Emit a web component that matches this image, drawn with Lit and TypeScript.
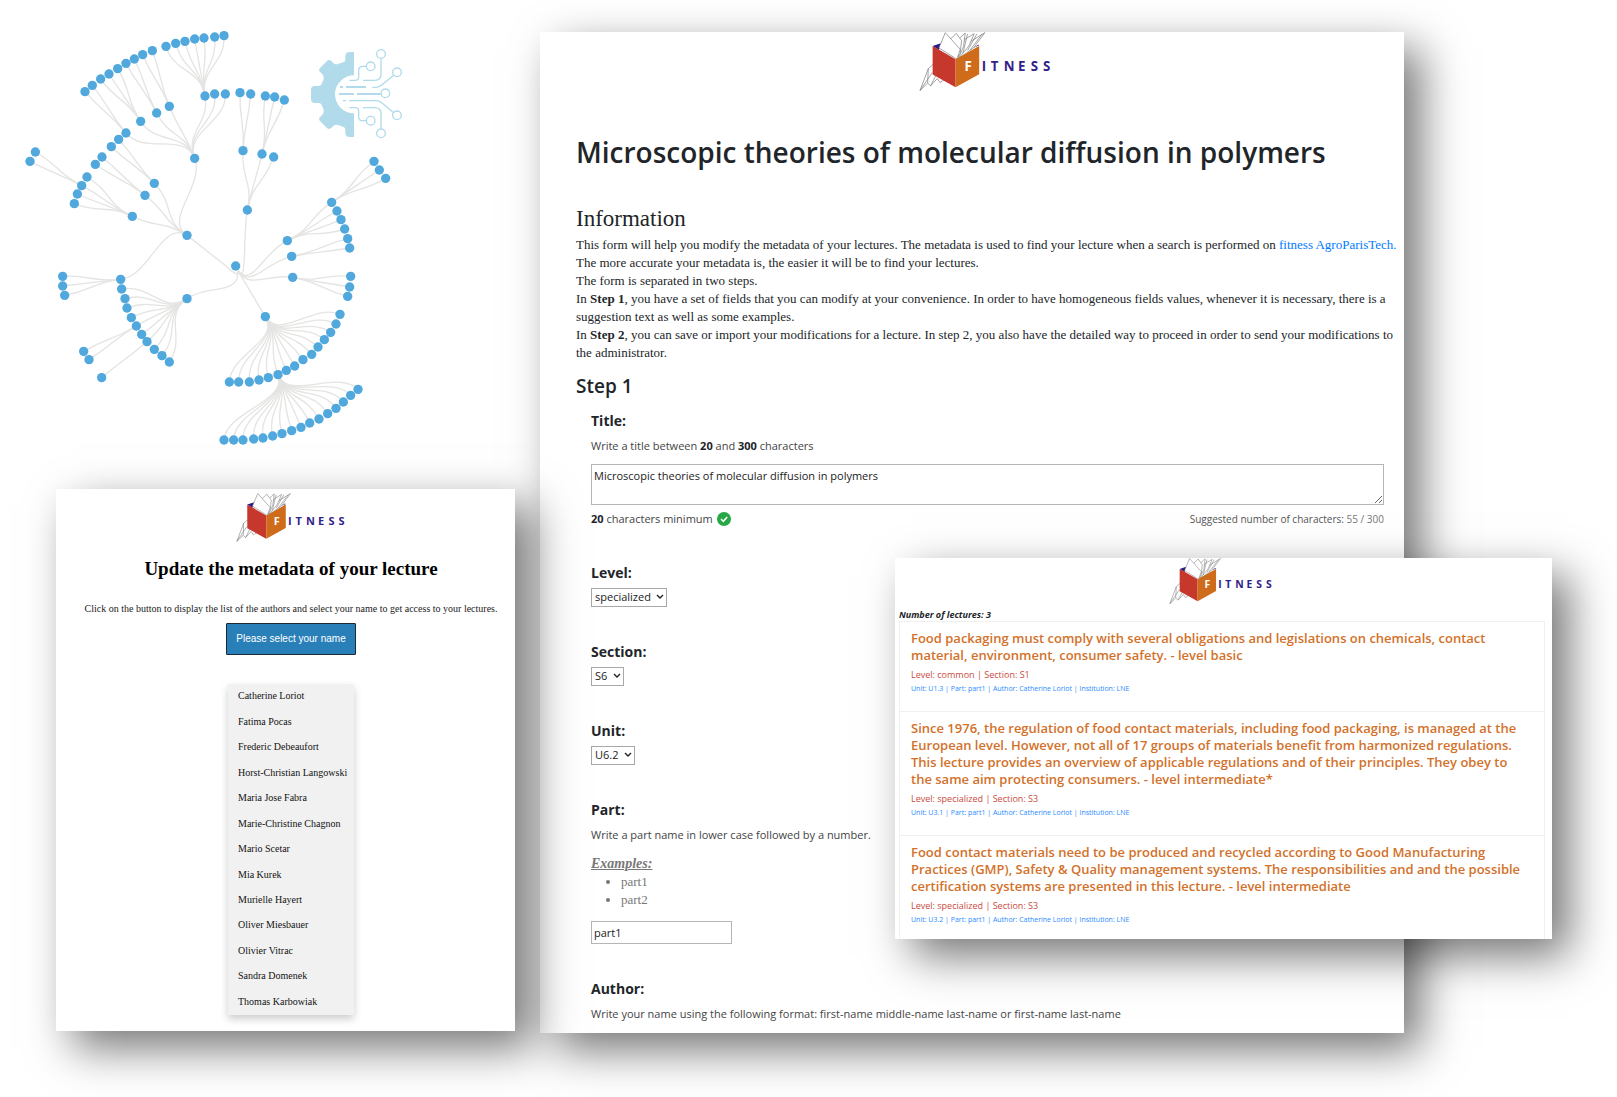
import { LitElement, html, css, svg } from "lit";
import { customElement, property } from "lit/decorators.js";

type Pt = [number, number];

/* ---------- Shared logo ---------- */
@customElement("fitness-logo")
class FitnessLogo extends LitElement {
  static styles = css`
    :host { display: block; }
    .mark { display: block; width: 100%; height: auto; }
    .page { fill: #fff; stroke: #777; stroke-width: 2; stroke-linejoin: round; }
    .word { font-family: "Open Sans", "Noto Sans", sans-serif; font-weight: 700; font-size: 40px; fill: #33218a; }
    .initial { fill: #fff; }
  `;
  render() {
    return html`<svg class="mark" viewBox="58 36 400 180" role="img" aria-label="FITNESS">
      <path class="page" d="M61 212 L86 146 L100 134 L112 150 L136 178 L121 188 L113 176 L93 198 L84 190 Z" />
      <path class="page" d="M86 146 L84 190 M61 212 L98 158 M93 198 L112 160" />
      <path d="M99 78 L124 70 L118 90 Z M239 76 L222 84 L236 74 Z" fill="#2b1b8c" />
      <path class="page" d="M174 108 L214 64 L256 38 L222 84 L180 114 Z" />
      <path class="page" d="M174 108 L196 58 L224 41 L208 78 L180 112 Z" />
      <path class="page" d="M174 108 L176 58 L197 39 L192 80 L178 112 Z" />
      <path class="page" d="M172 112 L150 60 L170 40 L186 62 L182 100 Z" />
      <path class="page" d="M118 84 L137 38 L182 88 L172 118 Z" />
      <path class="page" d="M204 42 L190 100 M232 42 L204 92 M248 42 L212 90" />
      <path d="M99 78 L168 118 V202 L99 164 Z" fill="#c6372c" />
      <path d="M168 118 L239 78 V163 L168 202 Z" fill="#cf6c1b" />
      <text class="word initial" x="195" y="153">F</text>
      <text class="word" x="247 274 313 356 394 431" y="153">ITNESS</text>
    </svg>`;
  }
}

/* ---------- Radial tree ---------- */
const CENTER: Pt = [707, 798];

const BRANCHES: { from: Pt; to: Pt[] }[] = [
  { from: [561, 706], to: [[584, 475], [463, 550], [435, 586], [397, 649], [362, 838]] },
  { from: [584, 475], to: [[615, 288], [644, 282], [676, 282], [508, 319], [470, 339], [422, 364], [378, 399]] },
  { from: [615, 288], to: [[498, 139], [527, 130], [555, 124], [584, 117], [612, 114], [644, 111], [672, 107]] },
  { from: [508, 319], to: [[457, 152], [428, 164]] },
  { from: [470, 339], to: [[403, 177], [378, 190]] },
  { from: [422, 364], to: [[353, 206], [327, 222], [302, 237]] },
  { from: [378, 399], to: [[277, 256], [255, 275]] },
  { from: [463, 550], to: [[356, 418], [334, 440]] },
  { from: [435, 586], to: [[306, 471], [286, 493]] },
  { from: [397, 649], to: [[261, 531], [245, 557], [232, 582], [223, 611]] },
  { from: [245, 557], to: [[106, 456], [90, 484]] },
  { from: [362, 838], to: [[188, 829], [188, 858], [194, 886]] },
  { from: [561, 896], to: [[365, 867], [375, 896], [381, 924], [394, 953], [409, 978], [425, 1003], [441, 1025], [463, 1048], [486, 1067], [508, 1086]] },
  { from: [409, 978], to: [[251, 1054], [267, 1079]] },
  { from: [441, 1025], to: [[305, 1133]] },
  { from: [742, 630], to: [[729, 452], [786, 462], [821, 471]] },
  { from: [729, 452], to: [[720, 278], [752, 282]] },
  { from: [786, 462], to: [[796, 288], [824, 291], [853, 300]] },
  { from: [862, 722], to: [[995, 607], [1011, 633], [1023, 659], [1034, 687]] },
  { from: [995, 607], to: [[1122, 484], [1138, 510], [1157, 535]] },
  { from: [875, 769], to: [[1043, 716], [1049, 744]] },
  { from: [878, 832], to: [[1052, 829], [1049, 861], [1043, 889]] },
  { from: [796, 950], to: [[1020, 943], [1008, 972], [992, 997], [973, 1019], [954, 1041], [935, 1063], [909, 1079], [884, 1098], [859, 1111], [834, 1124], [805, 1133], [777, 1140], [748, 1146], [716, 1146], [688, 1146]] },
  { from: [834, 1124], to: [[1074, 1168], [1052, 1186], [1030, 1206], [1008, 1225], [983, 1241], [957, 1257], [929, 1269], [903, 1282], [875, 1292], [846, 1301], [818, 1308], [789, 1314], [761, 1317], [729, 1320], [701, 1320], [672, 1320]] },
];

const TOP_NODES: Pt[] = [CENTER, [561, 706], [561, 896], [796, 950], [742, 630], [862, 722], [875, 769], [878, 832]];

const ROOT_LINKS = [
  "M561 706 L678 798 Q710 828 716 820",
  "M561 896 Q590 876 650 868 Q722 858 712 814",
  "M714 812 L796 950",
  "M742 630 C732 690 736 770 730 808 Q724 836 714 812",
  "M862 722 C800 752 770 830 734 826 Q722 822 714 812",
  "M875 769 C810 784 776 836 738 830 Q722 824 714 812",
  "M878 832 C820 822 780 850 744 838 Q724 830 714 812",
];

/* Each link leaves its parent along the parent's ray and meets the child along the child's ray. */
function link(a: Pt, b: Pt): string {
  const [cx, cy] = CENTER;
  const ra = Math.hypot(a[0] - cx, a[1] - cy);
  const rb = Math.hypot(b[0] - cx, b[1] - cy);
  const m = (ra + rb) / 2;
  const on = (p: Pt, r: number) => `${Math.round(cx + ((p[0] - cx) * m) / r)} ${Math.round(cy + ((p[1] - cy) * m) / r)}`;
  return `M${a[0]} ${a[1]} C${on(a, ra)} ${on(b, rb)} ${b[0]} ${b[1]}`;
}

@customElement("radial-tree")
class RadialTree extends LitElement {
  static styles = css`
    :host { display: block; }
    .canvas { display: block; width: 100%; height: auto; }
    .link { fill: none; stroke: #e4e4e2; stroke-width: 4; }
    .node { fill: #50a8dd; }
    .gear { fill: #b1dbea; }
    .wire { fill: none; stroke: #b1dbea; stroke-width: 4; }
    .bus { fill: none; stroke: #b1dbea; stroke-width: 6; }
  `;
  render() {
    const pads: Pt[] = [[1143, 162], [1112, 199], [1191, 217], [1156, 280], [1191, 346], [1112, 362], [1143, 400]];
    return html`<svg class="canvas" viewBox="0 0 1620 1467" aria-hidden="true">
      ${ROOT_LINKS.map((d) => svg`<path class="link" d=${d} />`)}
      ${BRANCHES.flatMap((b) => b.to.map((t) => svg`<path class="link" d=${link(b.from, t)} />`))}
      ${[...TOP_NODES, ...BRANCHES.flatMap((b) => b.to)].map(
        (p) => svg`<circle class="node" cx=${p[0]} cy=${p[1]} r="14" />`
      )}
      <path class="gear" d="M1062 156 H1050 Q1036 156 1036 169 V179 Q1036 185 1029 187 L1016 191 Q1008 194 1002 191 Q989 175 981 183 L960 204
        Q954 211 961 217 Q971 224 971 230 V238 Q968 244 965 252 Q963 258 955 258 H945 Q933 258 933 269 V298 Q933 309 945 309 H955
        Q963 309 965 315 Q968 323 971 329 V337 Q971 343 961 350 Q954 356 960 363 L981 384 Q989 392 1002 376 Q1008 373 1016 376 L1029 380
        Q1036 382 1036 388 V398 Q1036 411 1050 411 H1062 V340 A57 57 0 0 1 1062 226 Z" />
      <path class="wire" d="M1048 241 H1065 Q1076 241 1076 230 V212 Q1076 199 1088 199 H1099 M1089 241 H1125 Q1143 241 1143 222 V176
        M1117 262 H1128 Q1138 262 1146 254 L1181 226 M1029 302 h9 M1047 302 H1128 Q1138 302 1146 309 L1181 338
        M1048 323 H1065 Q1076 323 1076 334 V350 Q1076 362 1088 362 H1099 M1089 323 H1125 Q1143 323 1143 342 V386" />
      <path class="bus" d="M1020 261 h9 M1038 261 H1098 M1017 282 H1062 M1071 282 H1142" />
      ${pads.map((p) => svg`<circle class="wire" cx=${p[0]} cy=${p[1]} r="13" />`)}
    </svg>`;
  }
}

/* ---------- Author picker ---------- */
const AUTHORS = [
  "Catherine Loriot", "Fatima Pocas", "Frederic Debeaufort", "Horst-Christian Langowski", "Maria Jose Fabra",
  "Marie-Christine Chagnon", "Mario Scetar", "Mia Kurek", "Murielle Hayert", "Oliver Miesbauer",
  "Olivier Vitrac", "Sandra Domenek", "Thomas Karbowiak",
];

@customElement("author-picker")
class AuthorPicker extends LitElement {
  static styles = css`
    :host { display: flex; flex-direction: column; align-items: center; background: #fff; padding: 4px 0 16px 11px;
      font-family: "Times New Roman", "Liberation Serif", serif; }
    .logo { width: 110px; }
    .heading { margin: 14px 0 0; font-size: 19px; line-height: 24px; font-weight: 700; color: #000; }
    .hint { margin: 21px 0 0; font-size: 10px; line-height: 14px; color: #222; }
    .toggle { margin: 7px 0 0; height: 32px; padding: 0 9px; background: #2980b9; border: 1px solid #1b2a35; border-radius: 1px;
      color: #fff; font-family: Arial, "Liberation Sans", sans-serif; font-size: 10px; }
    .menu { display: flex; flex-direction: column; width: 126px; min-height: 331px; margin: 29px 0 0; padding: 0; list-style: none;
      background: #f1f1f1; box-shadow: 0 4px 8px rgba(0, 0, 0, 0.2); }
    .item { flex: 1; display: flex; align-items: center; padding: 0 10px; }
    .name { font-size: 10px; line-height: 14px; color: #111; text-decoration: none; white-space: nowrap; }
  `;
  render() {
    return html`
      <fitness-logo class="logo"></fitness-logo>
      <h1 class="heading">Update the metadata of your lecture</h1>
      <p class="hint">Click on the button to display the list of the authors and select your name to get access to your lectures.</p>
      <button class="toggle" type="button">Please select your name</button>
      <ul class="menu">
        ${AUTHORS.map((a) => html`<li class="item"><a class="name" href="#">${a}</a></li>`)}
      </ul>`;
  }
}

/* ---------- Metadata form ---------- */
@customElement("metadata-form")
class MetadataForm extends LitElement {
  static styles = css`
    :host { display: block; background: #fff; padding: 0 2px 0 36px; color: #212529; overflow: hidden;
      font-family: "Segoe UI", "Open Sans", "Noto Sans", sans-serif; font-size: 11px; line-height: 18px; }
    .logo { width: 133px; margin: 0 auto; padding-right: 8px; }
    .heading { margin: 40px 0 0; font-size: 28px; line-height: 40px; font-weight: 600; }
    .serif { font-family: Georgia, "Liberation Serif", serif; }
    .subheading { margin: 34px 0 0; font-size: 23px; line-height: 26px; font-weight: 400; }
    .para { margin: 4px 0 0; font-size: 13px; line-height: 18px; }
    .link { color: #007bff; text-decoration: none; }
    .step { margin: 11px 0 0; font-size: 19px; line-height: 26px; font-weight: 600; }
    .fields { padding: 0 18px 0 15px; }
    .field { display: flex; flex-direction: column; align-items: flex-start; height: 79px; }
    .title-field { height: 152px; margin-top: 12px; }
    .part-field { height: 179px; }
    .author-field { height: 54px; }
    .label { font-size: 14px; line-height: 20px; font-weight: 700; }
    .note { margin: 6px 0 0; line-height: 18px; color: #444; }
    .note b, .count b { color: #212529; }
    .area { box-sizing: border-box; width: 100%; height: 41px; margin: 9px 0 0; padding: 3px 2px; border: 1px solid #b5b5b5;
      font: inherit; line-height: 16px; color: #222; resize: vertical; background: #fff; }
    .foot { display: flex; justify-content: space-between; align-self: stretch; margin-top: 5px; }
    .count { display: flex; align-items: center; gap: 4px; color: #444; }
    .tick { width: 14px; height: 14px; }
    .limit { font-size: 10px; color: #555; }
    .limit-value { color: #777; }
    .picker { display: inline-grid; align-items: center; margin-top: 5px; }
    .select { grid-area: 1 / 1; appearance: none; height: 19px; padding: 0 15px 0 3px; border: 1px solid #a8a8a8; border-radius: 0;
      background: #fff; color: #222; font: inherit; line-height: 16px; }
    .chevron { grid-area: 1 / 1; justify-self: end; width: 8px; height: 6px; margin-right: 3px; pointer-events: none; }
    .examples { margin-top: 11px; color: #777; font-size: 13px; line-height: 18px; }
    .examples-title { font-size: 14px; font-weight: 700; font-style: italic; text-decoration: underline; }
    .list { margin: 0; padding: 0 0 0 30px; }
    .text { box-sizing: border-box; width: 141px; height: 23px; margin-top: 12px; padding: 1px 2px; border: 1px solid #b5b5b5;
      font: inherit; color: #222; background: #fff; }
  `;
  private picker(label: string, value: string) {
    const id = label.toLowerCase();
    return html`<div class="field">
      <label class="label" for=${id}>${label}:</label>
      <span class="picker">
        <select class="select" id=${id}><option>${value}</option></select>
        <svg class="chevron" viewBox="0 0 8 6"><path d="M1 1 L4 4 L7 1" fill="none" stroke="#222" stroke-width="1.4" /></svg>
      </span>
    </div>`;
  }
  render() {
    return html`
      <fitness-logo class="logo"></fitness-logo>
      <h1 class="heading">Microscopic theories of molecular diffusion in polymers</h1>
      <h2 class="subheading serif">Information</h2>
      <p class="para serif">
        This form will help you modify the metadata of your lectures. The metadata is used to find your lecture when a search is performed on <a class="link" href="#">fitness AgroParisTech.</a><br />
        The more accurate your metadata is, the easier it will be to find your lectures.<br />
        The form is separated in two steps.<br />
        In <b>Step 1</b>, you have a set of fields that you can modify at your convenience. In order to have homogeneous fields values, whenever it is necessary, there is a suggestion text as well as some examples.<br />
        In <b>Step 2</b>, you can save or import your modifications for a lecture. In step 2, you also have the detailed way to proceed in order to send your modifications to the administrator.
      </p>
      <h2 class="step">Step 1</h2>
      <form class="fields">
        <div class="field title-field">
          <label class="label" for="title">Title:</label>
          <p class="note">Write a title between <b>20</b> and <b>300</b> characters</p>
          <textarea class="area" id="title" .value=${"Microscopic theories of molecular diffusion in polymers"}></textarea>
          <div class="foot">
            <span class="count"><span><b>20</b> characters minimum</span>
              <svg class="tick" viewBox="0 0 14 14"><circle cx="7" cy="7" r="7" fill="#28a745" /><path d="M4 7 L6.300 9.300 L10.200 5" fill="none" stroke="#fff" stroke-width="1.500" /></svg>
            </span>
            <span class="limit">Suggested number of characters: <span class="limit-value">55 / 300</span></span>
          </div>
        </div>
        ${this.picker("Level", "specialized")} ${this.picker("Section", "S6")} ${this.picker("Unit", "U6.2")}
        <div class="field part-field">
          <label class="label" for="part">Part:</label>
          <p class="note">Write a part name in lower case followed by a number.</p>
          <div class="examples serif">
            <span class="examples-title">Examples:</span>
            <ul class="list"><li>part1</li><li>part2</li></ul>
          </div>
          <input class="text" id="part" type="text" .value=${"part1"} />
        </div>
        <div class="field author-field">
          <span class="label">Author:</span>
          <p class="note">Write your name using the following format: first-name middle-name last-name or first-name last-name</p>
        </div>
      </form>`;
  }
}

/* ---------- Lecture list ---------- */
const LECTURES = [
  { title: "Food packaging must comply with several obligations and legislations on chemicals, contact material, environment, consumer safety. - level basic", level: "common", section: "S1", unit: "U1.3" },
  { title: "Since 1976, the regulation of food contact materials, including food packaging, is managed at the European level. However, not all of 17 groups of materials benefit from harmonized regulations. This lecture provides an overview of applicable regulations and of their principles. They obey to the same aim protecting consumers. - level intermediate*", level: "specialized", section: "S3", unit: "U3.1" },
  { title: "Food contact materials need to be produced and recycled according to Good Manufacturing Practices (GMP), Safety & Quality management systems. The responsibilities and and the possible certification systems are presented in this lecture. - level intermediate", level: "specialized", section: "S3", unit: "U3.2" },
];

@customElement("lecture-list")
class LectureList extends LitElement {
  @property({ attribute: false }) lectures = LECTURES;
  static styles = css`
    :host { display: block; background: #fff; padding: 0 7px 0 4px; font-family: "Segoe UI", "Open Sans", "Noto Sans", sans-serif; }
    .logo { width: 104px; margin: 0 auto; padding-right: 3px; }
    .total { margin: 4px 0 0; font-size: 9px; line-height: 12px; font-weight: 700; font-style: italic; color: #212529; }
    .list { margin: 0; padding: 0; list-style: none; border: 1px solid #f0f0f0; border-width: 0 1px; }
    .item { padding: 8px 20px 16px 11px; border-top: 1px solid #f0f0f0; }
    .item:last-child { padding-bottom: 13px; }
    .title { margin: 0; font-size: 13px; line-height: 17px; font-weight: 600; color: #d2712a; }
    .level { margin: 4px 0 0; font-size: 9px; line-height: 14px; color: #c94a40; }
    .meta { display: block; margin-top: 1px; font-size: 7px; line-height: 12px; color: #2a8cff; text-decoration: none; }
  `;
  render() {
    return html`
      <fitness-logo class="logo"></fitness-logo>
      <p class="total">Number of lectures: ${this.lectures.length}</p>
      <ul class="list">
        ${this.lectures.map(
          (l) => html`<li class="item">
            <h3 class="title">${l.title}</h3>
            <p class="level">Level: ${l.level} | Section: ${l.section}</p>
            <a class="meta" href="#">Unit: ${l.unit} | Part: part1 | Author: Catherine Loriot | Institution: LNE</a>
          </li>`
        )}
      </ul>`;
  }
}

/* ---------- Board ---------- */
@customElement("app-root")
class AppRoot extends LitElement {
  static styles = css`
    :host { display: block; position: relative; background: #fff; overflow: hidden; padding-bottom: 65px; }
    .board { display: grid; grid-template-columns: minmax(0, 540fr) minmax(0, 864fr) minmax(0, 213fr); align-items: start; }
    .side { display: flex; flex-direction: column; position: relative; z-index: 1; }
    .window { box-shadow: 17px 17px 42px rgba(0, 0, 0, 0.54); }
    .picker { margin: 0 25px 0 56px; }
    .form { margin-top: 32px; }
    .lectures { position: absolute; z-index: 2; top: 558px; left: 895px; right: 65px; }
  `;
  render() {
    return html`
      <main class="board">
        <div class="side">
          <radial-tree></radial-tree>
          <author-picker class="picker window"></author-picker>
        </div>
        <metadata-form class="form window"></metadata-form>
      </main>
      <lecture-list class="lectures window"></lecture-list>`;
  }
}
